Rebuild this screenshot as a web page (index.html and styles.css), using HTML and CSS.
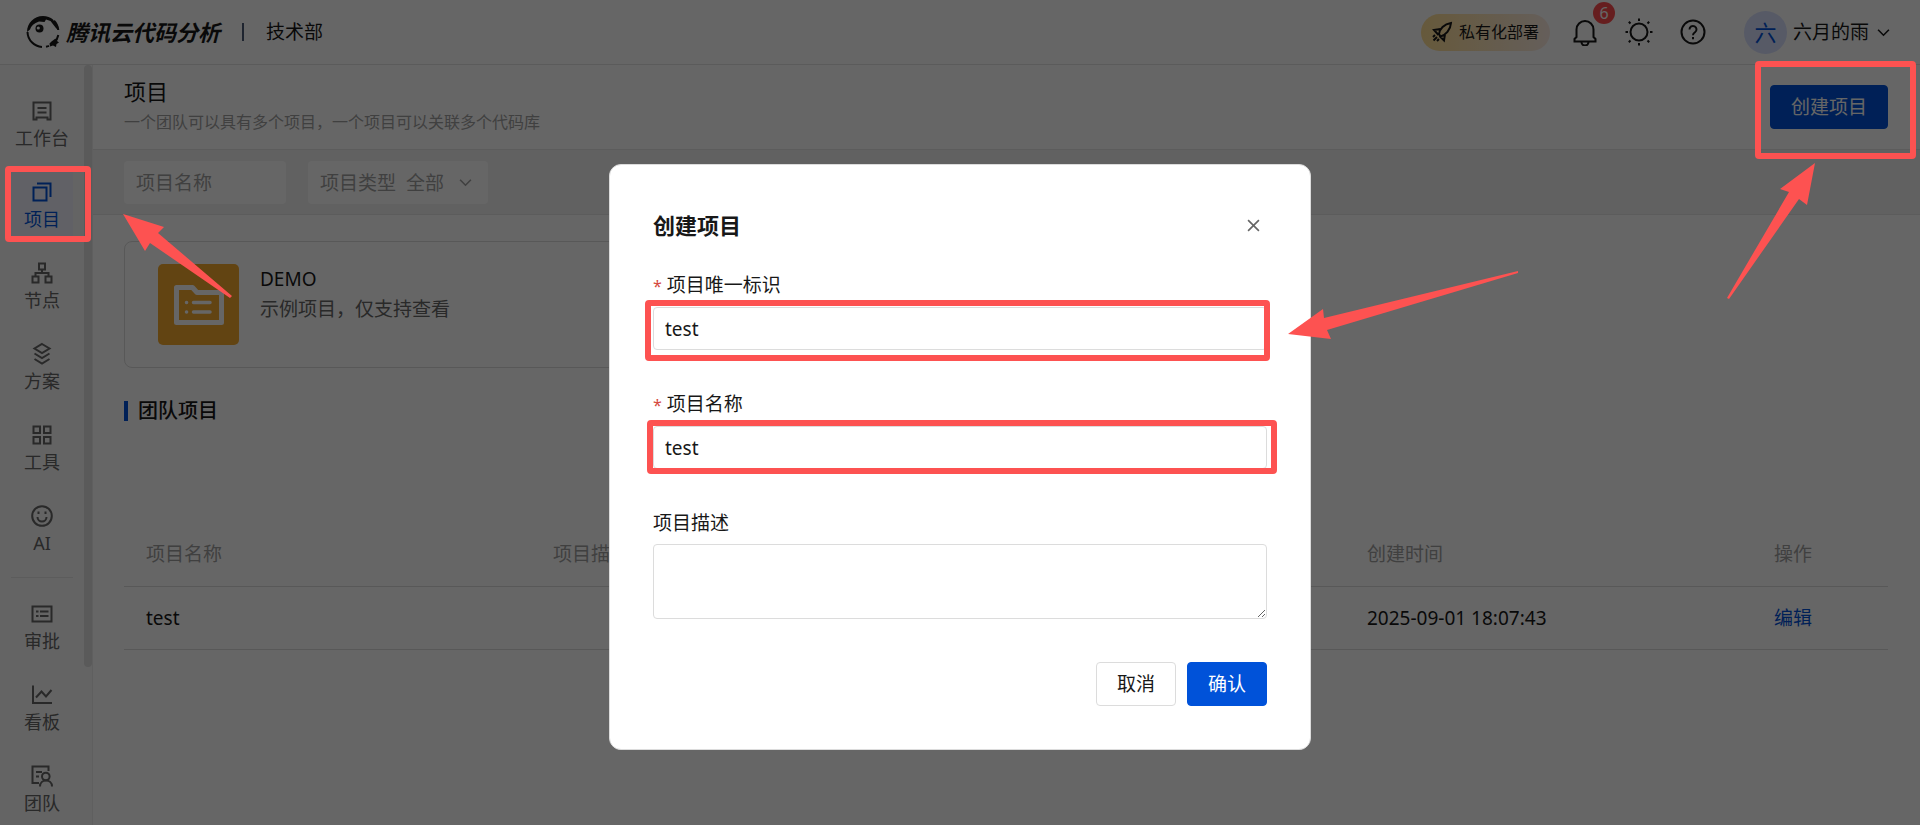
FILE: index.html
```html
<!DOCTYPE html>
<html lang="zh-CN">
<head>
<meta charset="UTF-8">
<meta name="viewport" content="width=device-width, initial-scale=1.0">
<title>腾讯云代码分析</title>
<link rel="stylesheet" href="styles.css">
</head>
<body>

<header class="header">
    <a class="brand" href="#">
        <svg class="brand-icon" viewBox="0 0 34 34">
            <path d="M28.500 27.500A15.500 15.500 0 0 0 32.300 20M32.300 15A15.500 15.500 0 0 0 28 5.800M23 30.800a15.500 15.500 0 0 1-3 .9M16 32A15.500 15.500 0 0 1 1.500 17" fill="none" stroke="#181818" stroke-width="2"/>
            <path d="M1 17C1 8 8 1 17 1c4 0 7.500 1.300 10 3.500l3.500 5.500 1.500 5-2.500-2.500L24.500 6 20 4.500 18.500 7 13 6.500C8 8 5 11 4 14.500z" fill="#181818"/>
            <circle cx="13.500" cy="13.500" r="4" fill="#181818"/>
            <circle cx="12.300" cy="13" r="1.600" fill="#fff"/>
            <path d="M29.500 23.500l1.500 2.500 2 1.500-2.500 1.500-.5 3-3-1.500-3 1-.5-3 2-2z" fill="#181818"/>
        </svg>
        <span class="brand-name">腾讯云代码分析</span>
    </a>
    <span class="header-line"></span>
    <span class="team-name">技术部</span>

    <div class="header-right">
        <a class="private-deploy" href="#">
            <svg class="rocket" viewBox="0 0 22 22">
                <path d="M8 13C8.500 8 13 3 20 2c-.5 7-5.500 12-10.500 13.500zM9.500 8L3 9l4.500 5M14 13l-1 6.500L8.500 15M2 16l2-2M2.500 19.500l3.500-3.500M6 20l2-2"/>
            </svg>
            私有化部署
        </a>
        <button class="icon-button bell" aria-label="消息">
            <svg viewBox="0 0 28 28">
                <path d="M3.500 23.500V21l2-2v-7.500a8.500 8.500 0 0 1 17 0V19l2 2v2.500z"/>
                <path d="M10.500 24a3.500 3.500 0 0 0 7 0"/>
            </svg>
            <span class="badge">6</span>
        </button>
        <button class="icon-button" aria-label="主题">
            <svg viewBox="0 0 28 28">
                <circle cx="14" cy="14" r="8.500"/>
                <path d="M14 0.500v2.500M14 25v2.500M0.500 14H3M25 14h2.500M3.800 3.800l1.700 1.700M22.500 22.500l1.700 1.700M3.800 24.200l1.700-1.700M22.500 5.500l1.700-1.700"/>
            </svg>
        </button>
        <button class="icon-button" aria-label="帮助">
            <svg viewBox="0 0 28 28">
                <circle cx="14" cy="14" r="11.500"/>
                <path d="M10.500 11.500a3.500 3.500 0 1 1 5.500 2.800c-1.300.9-2 1.400-2 3M14 19v2.200"/>
            </svg>
        </button>
        <button class="user">
            <span class="avatar">六</span>
            六月的雨
            <svg class="chevron" viewBox="0 0 12 12"><path d="M1 3.500l5 5 5-5"/></svg>
        </button>
    </div>
</header>

<div class="layout">
    <nav class="sidebar">
        <div class="menu">
            <a class="menu-item" href="#">
                <svg viewBox="0 0 24 24"><path d="M3.500 3.500h17v17h-3v-2h-11v2h-3zM7.500 9h9M7.500 13.500h9"/></svg>
                工作台
            </a>
            <a class="menu-item active" href="#">
                <svg viewBox="0 0 24 24"><path d="M3.500 7.500h13v13h-13zM7 3.500h13.500V17"/></svg>
                项目
            </a>
            <a class="menu-item" href="#">
                <svg viewBox="0 0 24 24"><path d="M9 2.500h6v6H9zM2.500 15.500h6v6h-6zM15.500 15.500h6v6h-6zM12 8.500V12M5.500 15.500V12h13v3.500"/></svg>
                节点
            </a>
            <a class="menu-item" href="#">
                <svg viewBox="0 0 24 24"><path d="M12 2l7.500 4.500L12 11 4.500 6.500zM4.500 11.500L12 16l7.500-4.500M4.500 17l7.500 4.500 7.500-4.500"/></svg>
                方案
            </a>
            <a class="menu-item" href="#">
                <svg viewBox="0 0 24 24"><path d="M3.500 3.500h6.500v6.500h-6.500zM14 3.500h6.500v6.500h-6.500zM3.500 14h6.500v6.500h-6.500zM14 14h6.500v6.500h-6.500z"/></svg>
                工具
            </a>
            <a class="menu-item" href="#">
                <svg viewBox="0 0 24 24"><circle cx="12" cy="12" r="9.800"/><path d="M7.500 13a4.500 4.500 0 0 0 9 0M8.500 7.500v2.500M15.500 7.500v2.500"/></svg>
                AI
            </a>
            <div class="menu-divider"></div>
            <a class="menu-item" href="#">
                <svg viewBox="0 0 24 24"><path d="M2.500 4.500h19v15h-19zM6 9.500h2.500M6 14h2.500M10 9.500h8.500M10 14h8.500"/></svg>
                审批
            </a>
            <a class="menu-item" href="#">
                <svg viewBox="0 0 24 24"><path d="M3 2.500v17.500h19M6 14.500l5.500-6 4.500 5 5.500-6.500"/></svg>
                看板
            </a>
            <a class="menu-item" href="#">
                <svg viewBox="0 0 24 24"><path d="M9 19H2.500V2.500h16V7M6 8h6M6 12.500h3"/><circle cx="15.800" cy="12.500" r="3.800"/><path d="M10 22.500c0-8 12-8 12 0"/></svg>
                团队
            </a>
        </div>
        <div class="scrollbar"></div>
    </nav>

    <main class="content">
        <div class="page-header">
            <div>
                <h1>项目</h1>
                <p>一个团队可以具有多个项目，一个项目可以关联多个代码库</p>
            </div>
            <button class="button primary">创建项目</button>
        </div>

        <div class="filter">
            <input class="filter-input" type="text" placeholder="项目名称" aria-label="项目名称">
            <div class="filter-select">
                <label for="project-type">项目类型</label>
                <select id="project-type">
                    <option>全部</option>
                </select>
                <svg class="chevron" viewBox="0 0 12 12"><path d="M1 3.500l5 5 5-5"/></svg>
            </div>
        </div>

        <section class="projects">
            <div class="demo-card">
                <div class="demo-icon">
                    <svg viewBox="0 0 50 40">
                        <path d="M2.500 2.500h16l4.500 5h24.500v30h-45z"/>
                        <path d="M12.500 17.500h.1M12.500 27h.1M19.500 17.500h16.500M19.500 27h16.500" stroke-width="3.500" stroke-linecap="round"/>
                    </svg>
                </div>
                <div>
                    <h3>DEMO</h3>
                    <p>示例项目，仅支持查看</p>
                </div>
            </div>

            <h2>团队项目</h2>

            <table class="project-table">
                <thead>
                    <tr>
                        <th>项目名称</th>
                        <th>项目描述</th>
                        <th></th>
                        <th>创建时间</th>
                        <th class="col-action">操作</th>
                    </tr>
                </thead>
                <tbody>
                    <tr>
                        <td>test</td>
                        <td></td>
                        <td></td>
                        <td>2025-09-01 18:07:43</td>
                        <td><a href="#">编辑</a></td>
                    </tr>
                </tbody>
            </table>
        </section>
    </main>
</div>

<div class="mask">
    <form class="dialog">
        <div class="dialog-header">
            <h2>创建项目</h2>
            <button type="button" class="close" aria-label="关闭">
                <svg viewBox="0 0 12 12"><path d="M1 1l10 10M11 1L1 11"/></svg>
            </button>
        </div>
        <div class="field">
            <label class="required" for="project-key">项目唯一标识</label>
            <input type="text" id="project-key" value="test">
        </div>
        <div class="field">
            <label class="required" for="project-name">项目名称</label>
            <input type="text" id="project-name" value="test">
        </div>
        <div class="field">
            <label for="project-desc">项目描述</label>
            <textarea id="project-desc"></textarea>
        </div>
        <div class="dialog-footer">
            <button type="button" class="button">取消</button>
            <button type="button" class="button primary">确认</button>
        </div>
    </form>
</div>

<!-- 标注 -->
<svg class="marks">
    <g class="mark-box">
        <rect x="8" y="169" width="80" height="70" rx="1"/>
        <rect x="1758" y="64" width="155" height="92" rx="1"/>
        <rect x="648" y="303" width="619" height="55" rx="1"/>
        <rect x="650" y="423" width="624" height="48" rx="1"/>
    </g>
    <g class="mark-arrow">
        <path d="M123 214L164 227 158 233 232 296 230 298 150 243 145 251z"/>
        <path d="M1815 163L1807 205 1799 199 1729 299 1727 298 1789 192 1780 189z"/>
        <path d="M1288 334L1323 309 1324 318 1518 271 1518 273 1327 330 1331 339z"/>
    </g>
</svg>

</body>
</html>
```
FILE: styles.css
```css
* {
    box-sizing: border-box;
}
body {
    margin: 0;
    height: 100vh;
    display: flex;
    flex-direction: column;
    overflow: hidden;
    font-family: "Noto Sans", "Noto Sans CJK SC", sans-serif;
    font-size: 19px;
    line-height: 28px;
    color: #181818;
    background: #fff;
}
h1, h2, h3, p {
    margin: 0;
    font-weight: 400;
}
a {
    color: inherit;
    text-decoration: none;
}
button, input, select, textarea {
    font: inherit;
    color: inherit;
}
svg {
    fill: none;
    stroke: currentColor;
    stroke-width: 2;
}

/* header */
.header {
    flex: none;
    display: flex;
    align-items: center;
    height: 65px;
    padding: 0 30px 0 26px;
    border-bottom: 1px solid #e3e3e3;
}
.brand {
    display: flex;
    align-items: center;
    gap: 6px;
}
.brand-icon {
    width: 34px;
    height: 34px;
    stroke: none;
}
.brand-name {
    font-size: 22px;
    font-weight: 700;
    font-style: italic;
}
.header-line {
    width: 2px;
    height: 18px;
    margin: 0 22px;
    background: #4b5b76;
}
.header-right {
    display: flex;
    align-items: center;
    margin-left: auto;
}
.private-deploy {
    display: flex;
    align-items: center;
    gap: 6px;
    height: 37px;
    margin-right: 21px;
    padding: 0 11px 0 10px;
    border-radius: 19px;
    font-size: 16px;
    background: linear-gradient(90deg, #ffdf95, #fcece2);
}
.rocket {
    width: 22px;
    height: 22px;
}
.icon-button {
    position: relative;
    width: 28px;
    height: 28px;
    margin-right: 26px;
    padding: 0;
    border: none;
    background: none;
}
.icon-button svg {
    display: block;
}
.badge {
    position: absolute;
    top: -16px;
    right: -16px;
    width: 22px;
    height: 22px;
    border-radius: 50%;
    font-size: 16px;
    line-height: 22px;
    color: #fff;
    background: #ff4d4f;
}
.user {
    display: flex;
    align-items: center;
    gap: 6px;
    padding: 0;
    border: none;
    background: none;
}
.avatar {
    width: 43px;
    height: 43px;
    margin-left: 11px;
    border-radius: 50%;
    font-size: 22px;
    line-height: 43px;
    color: #0052d9;
    background: #d9e1ff;
}
.chevron {
    width: 13px;
    height: 13px;
    stroke-width: 1.5;
}
.user .chevron {
    margin-left: 2px;
}

/* sidebar */
.layout {
    flex: 1;
    display: flex;
    min-height: 0;
}
.sidebar {
    flex: none;
    display: flex;
    width: 93px;
    border-right: 1px solid #ededed;
    background: #fafafa;
    overflow: hidden;
}
.menu {
    flex: 1;
    display: flex;
    flex-direction: column;
    gap: 13px;
    padding: 26px 11px 0;
}
.menu-item {
    flex: none;
    display: flex;
    flex-direction: column;
    align-items: center;
    gap: 3px;
    height: 68px;
    padding: 8px 0;
    font-size: 18px;
    line-height: 24px;
    white-space: nowrap;
    color: #666;
}
.menu-item svg {
    flex: none;
    width: 24px;
    height: 24px;
}
.menu-item.active {
    color: #0052d9;
    background: #f2f3ff;
}
.menu-divider {
    flex: none;
    height: 1px;
    margin-bottom: 3px;
    background: #e7e7e7;
}
.scrollbar {
    width: 8px;
    height: 602px;
    border-radius: 4px;
    background: #e1e1e1;
}

/* content */
.content {
    flex: 1;
    min-width: 0;
}
.page-header {
    display: flex;
    align-items: center;
    justify-content: space-between;
    height: 85px;
    padding: 0 32px 0 31px;
    border-bottom: 1px solid #e7e7e7;
}
.page-header h1 {
    margin-bottom: 2px;
    font-size: 22px;
    line-height: 30px;
}
.page-header p {
    padding-bottom: 2px;
    font-size: 16px;
    color: #a0a0a0;
}
.button {
    height: 44px;
    padding: 0 20px;
    border: 1px solid #dcdcdc;
    border-radius: 4px;
    background: #fff;
}
.button.primary {
    border-color: #0052d9;
    color: #fff;
    background: #0052d9;
}
.filter {
    display: flex;
    align-items: center;
    gap: 22px;
    height: 65px;
    padding: 0 31px;
    border-bottom: 1px solid #e7e7e7;
    background: #f3f3f3;
}
.filter-input,
.filter-select {
    height: 43px;
    padding: 1px 12px 0;
    border: none;
    border-radius: 4px;
    color: #a0a0a0;
    background: #fff;
}
.filter-input {
    width: 162px;
}
.filter-input::placeholder {
    color: #a0a0a0;
}
.filter-select {
    display: flex;
    align-items: center;
    width: 180px;
}
.filter-select select {
    width: 52px;
    margin-left: 10px;
    padding: 0;
    border: none;
    appearance: none;
    background: none;
}
.filter-select .chevron {
    margin-left: auto;
    margin-right: 4px;
}
.projects {
    padding: 26px 32px 0 31px;
}
.demo-card {
    display: flex;
    gap: 21px;
    width: 50%;
    height: 127px;
    padding: 22px 33px;
    border: 1px solid #dcdcdc;
    border-radius: 8px;
}
.demo-icon {
    display: flex;
    align-items: center;
    justify-content: center;
    width: 81px;
    height: 81px;
    border-radius: 5px;
    background: #f5aa2e;
}
.demo-icon svg {
    width: 50px;
    height: 40px;
    stroke: #fff;
    stroke-width: 5;
    stroke-linejoin: round;
}
.demo-card h3 {
    font-size: 19px;
    line-height: 30px;
}
.demo-card p {
    line-height: 30px;
    color: #666;
}
.projects h2 {
    margin: 33px 0 102px;
    padding-left: 10px;
    border-left: 4px solid #0052d9;
    font-size: 20px;
    font-weight: 500;
    line-height: 20px;
}
.project-table {
    width: 100%;
    table-layout: fixed;
    border-collapse: collapse;
}
.project-table th,
.project-table td {
    height: 63px;
    padding: 0 22px;
    border-bottom: 1px solid #dcdcdc;
    text-align: left;
}
.project-table th {
    font-weight: 400;
    color: #a0a0a0;
}
.project-table a {
    color: #0052d9;
}
.col-action {
    width: 136px;
}

/* dialog */
.mask {
    position: fixed;
    inset: 0;
    background: rgba(0, 0, 0, 0.6);
}
.dialog {
    width: 702px;
    margin: 164px auto 0;
    padding: 43px;
    border: 1px solid #dcdcdc;
    border-radius: 12px;
    background: #fff;
}
.dialog-header {
    display: flex;
    align-items: center;
    justify-content: space-between;
    margin-bottom: 29px;
}
.dialog-header h2 {
    font-size: 22px;
    font-weight: 700;
    line-height: 34px;
}
.close {
    padding: 7px;
    border: none;
    line-height: 0;
    color: #666;
    background: none;
}
.close svg {
    width: 13px;
    height: 13px;
    stroke-width: 1.5;
}
.field {
    margin-bottom: 40px;
}
.field label {
    display: block;
    margin-bottom: 7px;
}
.field .required::before {
    content: "*";
    margin-right: 5px;
    font-size: 16px;
    color: #d54941;
}
.field input,
.field textarea {
    display: block;
    width: 100%;
    height: 43px;
    padding: 0 11px;
    border: 1px solid #dcdcdc;
    border-radius: 4px;
    background: #fff;
}
.field textarea {
    height: 75px;
    padding: 6px 11px;
    resize: vertical;
}
.dialog-footer {
    display: flex;
    justify-content: flex-end;
    gap: 11px;
    margin-top: 43px;
}

/* marks */
.marks {
    position: absolute;
    top: 0;
    left: 0;
    width: 100%;
    height: 100%;
    pointer-events: none;
}
.mark-box {
    stroke: #fd5251;
    stroke-width: 6;
}
.mark-arrow {
    fill: #fd5251;
    stroke: none;
}
```
